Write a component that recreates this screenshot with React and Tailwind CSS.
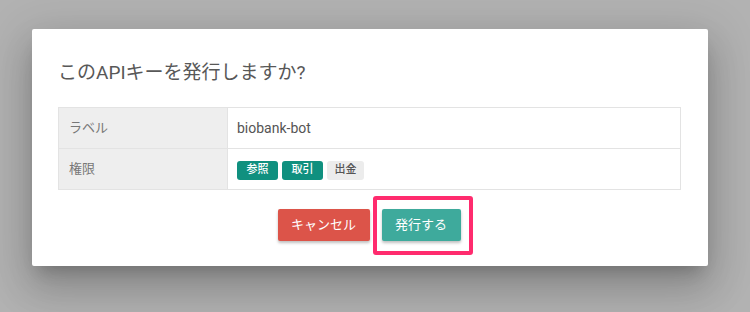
export default function App() {
  const font = { };
  return (
    <div className="w-[750px] h-[312px] bg-[#b2b2b2] pt-[29px] px-[32px] overflow-hidden [font-family:Roboto,'Noto_Sans_CJK_JP',sans-serif]">
      <div className="w-[676px] h-[237px] bg-white rounded-[2px] shadow-[0_11px_15px_-7px_rgba(0,0,0,0.2),0_24px_38px_3px_rgba(0,0,0,0.14),0_9px_46px_8px_rgba(0,0,0,0.12)] pt-[30px] pl-[26px] pr-[27px] flex flex-col">
        <h2 className="text-[19px] leading-[28px] text-[#585858] tracking-[0px]">このAPIキーを発行しますか?</h2>
        <table className="mt-[20px] w-full border-collapse border border-[#e3e3e3] text-[14px]">
          <tbody>
            <tr className="h-[41px]">
              <td className="w-[169px] bg-[#eeeeee] border border-[#e3e3e3] pl-[10px] text-[13px] text-[#777]">ラベル</td>
              <td className="border border-[#e3e3e3] pl-[9px] text-[#555]">biobank-bot</td>
            </tr>
            <tr className="h-[41px]">
              <td className="bg-[#eeeeee] border border-[#e3e3e3] pl-[10px] text-[13px] text-[#777]">権限</td>
              <td className="border border-[#e3e3e3] pl-[9px]">
                <div className="flex gap-[4px] pt-[2px]">
                  <span className="w-[41px] h-[19px] rounded-[3px] bg-[#10907f] text-white text-[11px] font-medium flex items-center justify-center">参照</span>
                  <span className="w-[41px] h-[19px] rounded-[3px] bg-[#10907f] text-white text-[11px] font-medium flex items-center justify-center">取引</span>
                  <span className="w-[37px] h-[19px] rounded-[3px] bg-[#ececec] text-[#555] text-[11px] font-medium flex items-center justify-center">出金</span>
                </div>
              </td>
            </tr>
          </tbody>
        </table>
        <div className="mt-[19px] flex justify-center gap-[12px] pr-[1px]">
          <button className="w-[92px] h-[32px] rounded-[2px] bg-[#dc5449] text-white text-[13px] shadow-[0_2px_3px_rgba(0,0,0,0.25)]">キャンセル</button>
          <div className="relative">
            <span className="absolute left-[-9px] right-[-12px] top-[-13px] bottom-[-14px] border-[4px] border-[#ff2b6e] rounded-[3px]" />
            <button className="relative w-[79px] h-[32px] rounded-[2px] bg-[#3eaa9c] text-white text-[13px] shadow-[0_2px_3px_rgba(0,0,0,0.25)]">発行する</button>
          </div>
        </div>
      </div>
    </div>
  );
}
